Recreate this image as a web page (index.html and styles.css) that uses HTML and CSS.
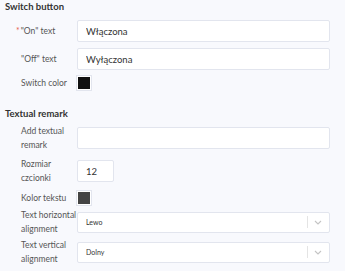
FILE: index.html
```html
<!DOCTYPE html>
<html lang="pl">
<head>
    <meta charset="UTF-8">
    <meta name="viewport" content="width=device-width, initial-scale=1.0">
    <title>Switch settings</title>
    <link rel="stylesheet" href="styles.css">
</head>
<body>

    <div class="panel">
        <h3 class="section-title">Switch button</h3>

        <div class="field">
            <label><span class="required">*</span>"On" text</label>
            <input type="text" class="text-input" value="Włączona">
        </div>

        <div class="field">
            <label>"Off" text</label>
            <input type="text" class="text-input" value="Wyłączona">
        </div>

        <div class="field field-color">
            <label>Switch color</label>
            <span class="swatch black"></span>
        </div>

        <h3 class="section-title second">Textual remark</h3>

        <div class="field">
            <label>Add textual remark</label>
            <input type="text" class="text-input" value="">
        </div>

        <div class="field size-row">
            <label>Rozmiar czcionki</label>
            <input type="text" class="text-input small" value="12">
        </div>

        <div class="field field-color kolor-row">
            <label>Kolor tekstu</label>
            <span class="swatch gray"></span>
        </div>

        <div class="field">
            <label>Text horizontal alignment</label>
            <div class="select">
                <span class="select-value">Lewo</span>
                <span class="select-sep"></span>
                <svg class="chevron" width="8" height="5" viewBox="0 0 8 5"><path d="M1 1l3 3 3-3" fill="none" stroke="#c4c4c4" stroke-width="1.1"/></svg>
            </div>
        </div>

        <div class="field last-row">
            <label>Text vertical alignment</label>
            <div class="select">
                <span class="select-value">Dolny</span>
                <span class="select-sep"></span>
                <svg class="chevron" width="8" height="5" viewBox="0 0 8 5"><path d="M1 1l3 3 3-3" fill="none" stroke="#c4c4c4" stroke-width="1.1"/></svg>
            </div>
        </div>
    </div>

</body>
</html>
```

FILE: styles.css
```css
body {
    margin: 0;
    background-color: #f8f9fd;
    font-family: Lato, "Open Sans", sans-serif;
    color: #333;
}

.panel {
    padding: 0 15px 0 5px;
}

.section-title {
    margin: 0 0 3px 0;
    font-size: 9.5px;
    line-height: 14px;
    font-weight: bold;
    color: #333;
}

.section-title.second {
    margin-top: 14px;
}

.field {
    display: grid;
    grid-template-columns: 56px 1fr;
    align-items: center;
    min-height: 28px;
    padding-left: 16px;
}

.field label {
    font-size: 8.5px;
    line-height: 14px;
    color: #555;
}

.required {
    color: #e8604c;
    margin-left: -5px;
    margin-right: 1px;
}

.text-input {
    box-sizing: border-box;
    height: 22px;
    width: 100%;
    border: 1px solid #e2e5ee;
    border-radius: 2px;
    background-color: #fff;
    padding: 0 8px;
    font-family: Lato, "Open Sans", sans-serif;
    font-size: 9.5px;
    color: #333;
    outline: none;
}

.text-input.small {
    width: 37px;
}

.field-color {
    min-height: 20px;
}

.swatch {
    display: block;
    box-sizing: border-box;
    width: 14px;
    height: 14px;
    border: 1px solid #fff;
    outline: 1px solid #e2e5ee;
}

.swatch.black {
    background-color: #111;
}

.swatch.gray {
    background-color: #444;
}

.size-row {
    margin-top: 5px;
}

.kolor-row {
    margin-top: 3px;
}

.last-row {
    margin-top: 2px;
}

.select {
    box-sizing: border-box;
    height: 21px;
    display: flex;
    align-items: center;
    border: 1px solid #e2e5ee;
    border-radius: 2px;
    background-color: #fff;
    padding: 0 7px 0 8px;
}

.select-value {
    flex: 1;
    font-size: 7px;
    color: #333;
}

.select-sep {
    width: 1px;
    height: 12px;
    background-color: #e4e4e4;
    margin-right: 6px;
}

.chevron {
    display: block;
}
```
